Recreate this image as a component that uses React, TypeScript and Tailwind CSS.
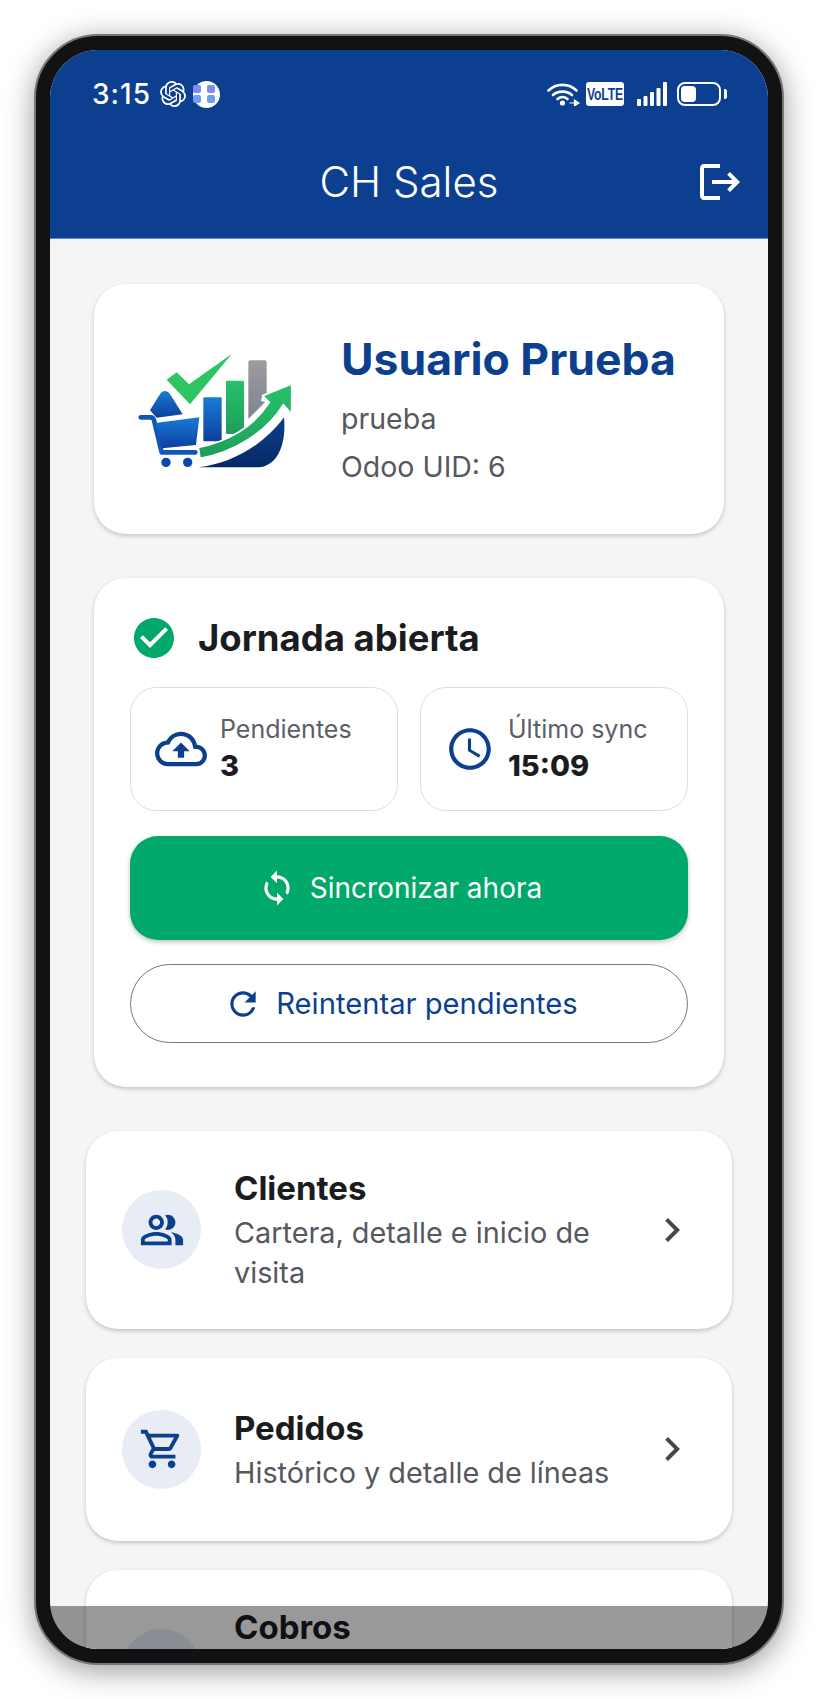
import type { ReactNode } from "react";
import {
  MdAccessTime,
  MdCheckCircle,
  MdChevronRight,
  MdLogout,
  MdOutlineCloudUpload,
  MdOutlinePeopleAlt,
  MdOutlineShoppingCart,
  MdRefresh,
  MdSync,
} from "react-icons/md";
import { SiOpenai } from "react-icons/si";

const FONT = "font-['Inter','Noto_Sans',sans-serif]";

function Logo() {
  return (
    <svg viewBox="0 0 570 420" className="h-[140px] w-[190px] flex-none">
      <defs>
        <linearGradient id="azul" x1="0" y1="0" x2="0" y2="1">
          <stop offset="0" stopColor="#1b7ad8" />
          <stop offset="1" stopColor="#0b3f9c" />
        </linearGradient>
        <linearGradient id="verde" x1="0" y1="0" x2="0" y2="1">
          <stop offset="0" stopColor="#27c26a" />
          <stop offset="1" stopColor="#1f9d5c" />
        </linearGradient>
        <linearGradient id="gris" x1="0" y1="0" x2="0" y2="1">
          <stop offset="0" stopColor="#9a9ca1" />
          <stop offset="1" stopColor="#80848c" />
        </linearGradient>
        <linearGradient id="casco" x1="0" y1="0" x2="0" y2="1">
          <stop offset="0" stopColor="#0d3f8c" />
          <stop offset="1" stopColor="#062a66" />
        </linearGradient>
      </defs>
      {/* Barras */}
      <path d="M385 70q0-6 6-6h43q6 0 6 6v105l-12-8-5 18 12 5-50 50z" fill="url(#gris)" />
      <rect x="318" y="125" width="54" height="160" rx="3" fill="url(#verde)" />
      <rect x="250" y="175" width="55" height="132" rx="3" fill="url(#azul)" />
      {/* Check */}
      <path d="M140 122L170 100L207 136L336 44L210 196Z" fill="#2fc462" />
      {/* Carrito */}
      <path d="M90 214L122 162Q134 150 148 162L188 226L110 236Z" fill="url(#azul)" />
      <path
        d="M62 235H92Q100 235 102 244L125 340H226"
        fill="none"
        stroke="#1058b8"
        strokeWidth="14"
        strokeLinecap="round"
        strokeLinejoin="round"
      />
      <path d="M106 252L238 235L228 318L126 328Z" fill="url(#azul)" />
      <circle cx="138" cy="370" r="14" fill="#0d47a8" />
      <circle cx="203" cy="370" r="14" fill="#0d47a8" />
      {/* Casco y flecha */}
      <path d="M235 385C330 375 430 320 492 235C500 320 470 385 410 385Z" fill="url(#casco)" />
      <path
        d="M235 325C320 310 400 265 448 190L428 170L515 135V225L490 197C440 280 340 340 240 358Z"
        fill="url(#verde)"
        stroke="#fff"
        strokeWidth="5"
      />
    </svg>
  );
}

function StatusBar() {
  return (
    <div className="flex h-[30px] items-center pl-[42px] pr-[41px] text-white">
      <span className="text-[28px] font-medium leading-none tracking-[1px]">3:15</span>
      <SiOpenai className="ml-[9px] text-[26px]" />
      <span className="ml-[7px] grid h-[27px] w-[27px] grid-cols-2 place-content-center gap-[2px] rounded-full bg-white">
        <i className="h-[8px] w-[8px] rounded-[2px] bg-[#7d8cf0]" />
        <i className="h-[8px] w-[8px] rounded-[2px] bg-[#7d8cf0]" />
        <i className="h-[8px] w-[8px] rounded-[2px] bg-[#6f9df2]" />
        <i className="h-[8px] w-[8px] rounded-[2px] bg-[#6f9df2]" />
      </span>

      <svg viewBox="0 0 33 24" className="ml-auto h-[24px] w-[33px]" fill="none" stroke="#fff" strokeLinecap="round">
        <path d="M1.5 8.5C9 1 22 1 29.5 8.5" strokeWidth="2.6" />
        <path d="M6 13C11 8.5 20 8.5 25 13" strokeWidth="2.6" />
        <path d="M10.5 17C13.5 14.5 17.5 14.5 20.5 17" strokeWidth="2.6" />
        <circle cx="15.5" cy="21" r="2.6" fill="#fff" stroke="none" />
        <path d="M23 21H27.5M27.5 18V24L32 21Z" strokeWidth="1.2" fill="#fff" />
      </svg>
      <span className="ml-[6px] flex h-[24px] w-[38px] items-center justify-center rounded-[3px] bg-white">
        <span className="scale-x-[0.72] font-['Liberation_Sans',sans-serif] text-[17px] font-bold leading-none tracking-[-0.3px] text-[#0d3f91]">
          VoLTE
        </span>
      </span>
      <svg viewBox="0 0 30 24" className="ml-[13px] h-[24px] w-[30px]" fill="#fff">
        <rect x="0" y="17" width="4" height="7" rx="1" />
        <rect x="6.5" y="14" width="4" height="10" rx="1" />
        <rect x="13" y="10" width="4" height="14" rx="1" />
        <rect x="19.5" y="6" width="4" height="18" rx="1" />
        <rect x="26" y="0" width="4" height="24" rx="1" />
      </svg>
      <span className="ml-[10px] flex h-[24px] w-[44px] items-center rounded-[8px] border-2 border-white p-[2px]">
        <span className="h-full w-[15px] rounded-[4px] bg-white" />
      </span>
      <span className="ml-[3px] h-[10px] w-[3px] rounded-r-[2px] bg-white" />
    </div>
  );
}

function Stat({ icon, label, value }: { icon: ReactNode; label: string; value: string }) {
  return (
    <div className="flex h-[124px] flex-1 items-center gap-[13px] rounded-[26px] border-[1.5px] border-[#d8dfea] pl-[24px]">
      <span className="text-[#0d3f8f]">{icon}</span>
      <div className="pb-[2px]">
        <div className="text-[25px] leading-[33px] text-[#5a5f6b]">{label}</div>
        <div className="mt-[2px] text-[29px] font-extrabold leading-[36px] text-[#1a1c20]">{value}</div>
      </div>
    </div>
  );
}

function Row({ icon, title, sub }: { icon: ReactNode; title: string; sub?: string }) {
  return (
    <div className="flex min-h-[183px] flex-none items-center rounded-[32px] bg-white pb-[36px] pl-[36px] pr-[36px] pt-[35px] shadow-[0_2px_4px_rgba(0,0,0,0.2)]">
      <span className="grid h-[79px] w-[79px] flex-none place-items-center rounded-full bg-[#e7ecf5] text-[#0d3f8f]">
        {icon}
      </span>
      <div className="ml-[33px] flex-1">
        <div className="text-[33px] font-bold leading-[44px] text-[#1a1c20]">{title}</div>
        {sub ? (
          <p className="mt-[3px] text-[28.8px] leading-[40px] text-[#55585f]">{sub}</p>
        ) : (
          <div className="h-[83px]" />
        )}
      </div>
      <MdChevronRight className="ml-[20px] flex-none text-[48px] text-[#44474e]" />
    </div>
  );
}

export default function App() {
  return (
    <div className={`flex h-[1699px] justify-center overflow-hidden bg-white pt-[34px] ${FONT}`}>
      {/* Marco del teléfono */}
      <div className="h-[1631px] w-[750px] rounded-[64px] border-2 border-[#777] bg-[#111214] p-[14px] shadow-[0_6px_30px_rgba(0,0,0,0.4)]">
        <div className="relative flex h-[1599px] w-[718px] flex-col overflow-hidden rounded-[48px] bg-[#f4f5f7]">
          {/* Cabecera */}
          <div className="h-[189px] flex-none border-b border-[#5f86c0] bg-[#0d3f91] pt-[29px]">
            <StatusBar />
            <div className="mt-[45px] grid grid-cols-[1fr_auto_1fr] items-center px-[24px]">
              <span />
              <span className="text-[42px] font-light leading-[56px] text-white">CH Sales</span>
              <MdLogout className="justify-self-end text-[48px] text-white" />
            </div>
          </div>

          <div className="flex min-h-0 flex-1 flex-col overflow-hidden pt-[45px]">
            {/* Usuario */}
            <div className="mx-[44px] flex h-[250px] flex-none items-center rounded-[32px] bg-white pl-[26px] shadow-[0_2px_4px_rgba(0,0,0,0.2)]">
              <Logo />
              <div className="ml-[31px] pt-[4px]">
                <div className="text-[44.5px] font-bold leading-[56px] text-[#0d3f8f]">Usuario Prueba</div>
                <div className="mt-[8px] text-[28.5px] leading-[48px] text-[#55585f]">prueba</div>
                <div className="text-[28.5px] leading-[48px] text-[#55585f]">Odoo UID: 6</div>
              </div>
            </div>

            {/* Jornada */}
            <div className="mx-[44px] mt-[44px] flex h-[509px] flex-none flex-col rounded-[32px] bg-white px-[36px] pt-[37px] shadow-[0_2px_4px_rgba(0,0,0,0.2)]">
              <div className="flex h-[46px] items-center">
                <MdCheckCircle className="text-[48px] text-[#00a86b]" />
                <span className="ml-[20px] text-[36.5px] font-bold text-[#1a1c20]">Jornada abierta</span>
              </div>
              <div className="mt-[26px] flex gap-[22px]">
                <Stat icon={<MdOutlineCloudUpload className="text-[52px]" />} label="Pendientes" value="3" />
                <Stat icon={<MdAccessTime className="text-[50px]" />} label="Último sync" value="15:09" />
              </div>
              <button className="mt-[25px] flex h-[104px] flex-none items-center justify-center gap-[14px] rounded-[28px] bg-[#00a86b] pr-[18px] text-[28px] text-white shadow-[0_2px_5px_rgba(0,0,0,0.25)]">
                <MdSync className="text-[38px]" />
                Sincronizar ahora
              </button>
              <button className="mt-[24px] flex h-[79px] flex-none items-center justify-center gap-[14px] rounded-full border-[1.5px] border-[#777] pr-[16px] text-[29.2px] text-[#0d3f8f]">
                <MdRefresh className="text-[38px]" />
                Reintentar pendientes
              </button>
            </div>

            {/* Accesos */}
            <div className="mx-[36px] mt-[44px] flex flex-col gap-[29px]">
              <Row
                icon={<MdOutlinePeopleAlt className="text-[46px]" />}
                title="Clientes"
                sub="Cartera, detalle e inicio de visita"
              />
              <Row
                icon={<MdOutlineShoppingCart className="text-[46px]" />}
                title="Pedidos"
                sub="Histórico y detalle de líneas"
              />
              <Row icon={null} title="Cobros" />
            </div>
          </div>

          {/* Velo inferior */}
          <div className="absolute inset-x-0 bottom-0 h-[43px] bg-black/40" />
        </div>
      </div>
    </div>
  );
}
